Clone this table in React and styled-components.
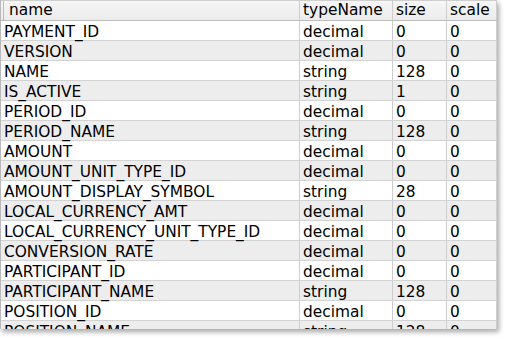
import React from "react";
import styled, { createGlobalStyle } from "styled-components";

const GlobalStyle = createGlobalStyle`
  html, body {
    margin: 0;
    padding: 0;
    background: #ffffff;
  }
  body {
    font-family: "DejaVu Sans", "Liberation Sans", sans-serif;
  }
`;

const Page = styled.div`
  width: 506px;
  height: 343px;
  overflow: hidden;
  background: #ffffff;
`;

const Frame = styled.div`
  width: 497px;
  height: 329px;
  overflow: hidden;
  box-sizing: border-box;
  border-left: 1px solid #b9b9b9;
  background: #ffffff;
  box-shadow: 2px 3px 5px rgba(0, 0, 0, 0.35);
`;

const Row = styled.div`
  display: grid;
  grid-template-columns: 299px 93px 54px 50px;
  height: 20px;
  box-sizing: border-box;
  border-bottom: 1px solid #d3d3d3;
  background: ${({ $striped }) => ($striped ? "#ededed" : "#ffffff")};
`;

const HeaderRow = styled(Row)`
  height: 21px;
  border-top: 1px solid #cfcfcf;
  border-bottom: 1px solid #bcbcbc;
  background: linear-gradient(#f6f6f6, #ebebeb);
`;

const Cell = styled.div`
  box-sizing: border-box;
  height: 19px;
  border-right: 1px solid #cdcdcd;
  padding-left: 3px;
  font-size: 15.4px;
  line-height: 22px;
  color: #000000;
  white-space: nowrap;
`;

const HeaderCell = styled(Cell)`
  line-height: 19px;
  padding-left: ${({ $first }) => ($first ? "5px" : "3px")};
  border-left: ${({ $first }) => ($first ? "1px solid #bdbdbd" : "none")};
  margin-left: ${({ $first }) => ($first ? "2px" : "0")};
`;

const columns = ["name", "typeName", "size", "scale"];

const rows = [
  ["PAYMENT_ID", "decimal", "0", "0"],
  ["VERSION", "decimal", "0", "0"],
  ["NAME", "string", "128", "0"],
  ["IS_ACTIVE", "string", "1", "0"],
  ["PERIOD_ID", "decimal", "0", "0"],
  ["PERIOD_NAME", "string", "128", "0"],
  ["AMOUNT", "decimal", "0", "0"],
  ["AMOUNT_UNIT_TYPE_ID", "decimal", "0", "0"],
  ["AMOUNT_DISPLAY_SYMBOL", "string", "28", "0"],
  ["LOCAL_CURRENCY_AMT", "decimal", "0", "0"],
  ["LOCAL_CURRENCY_UNIT_TYPE_ID", "decimal", "0", "0"],
  ["CONVERSION_RATE", "decimal", "0", "0"],
  ["PARTICIPANT_ID", "decimal", "0", "0"],
  ["PARTICIPANT_NAME", "string", "128", "0"],
  ["POSITION_ID", "decimal", "0", "0"],
  ["POSITION_NAME", "string", "128", "0"],
];

export default function App() {
  return (
    <>
      <GlobalStyle />
      <Page>
        <Frame>
          <HeaderRow>
            {columns.map((col, i) => (
              <HeaderCell key={col} $first={i === 0}>
                {col}
              </HeaderCell>
            ))}
          </HeaderRow>
          {rows.map((row, i) => (
            <Row key={row[0]} $striped={i % 2 === 1}>
              {row.map((value, j) => (
                <Cell key={j}>{value}</Cell>
              ))}
            </Row>
          ))}
        </Frame>
      </Page>
    </>
  );
}
